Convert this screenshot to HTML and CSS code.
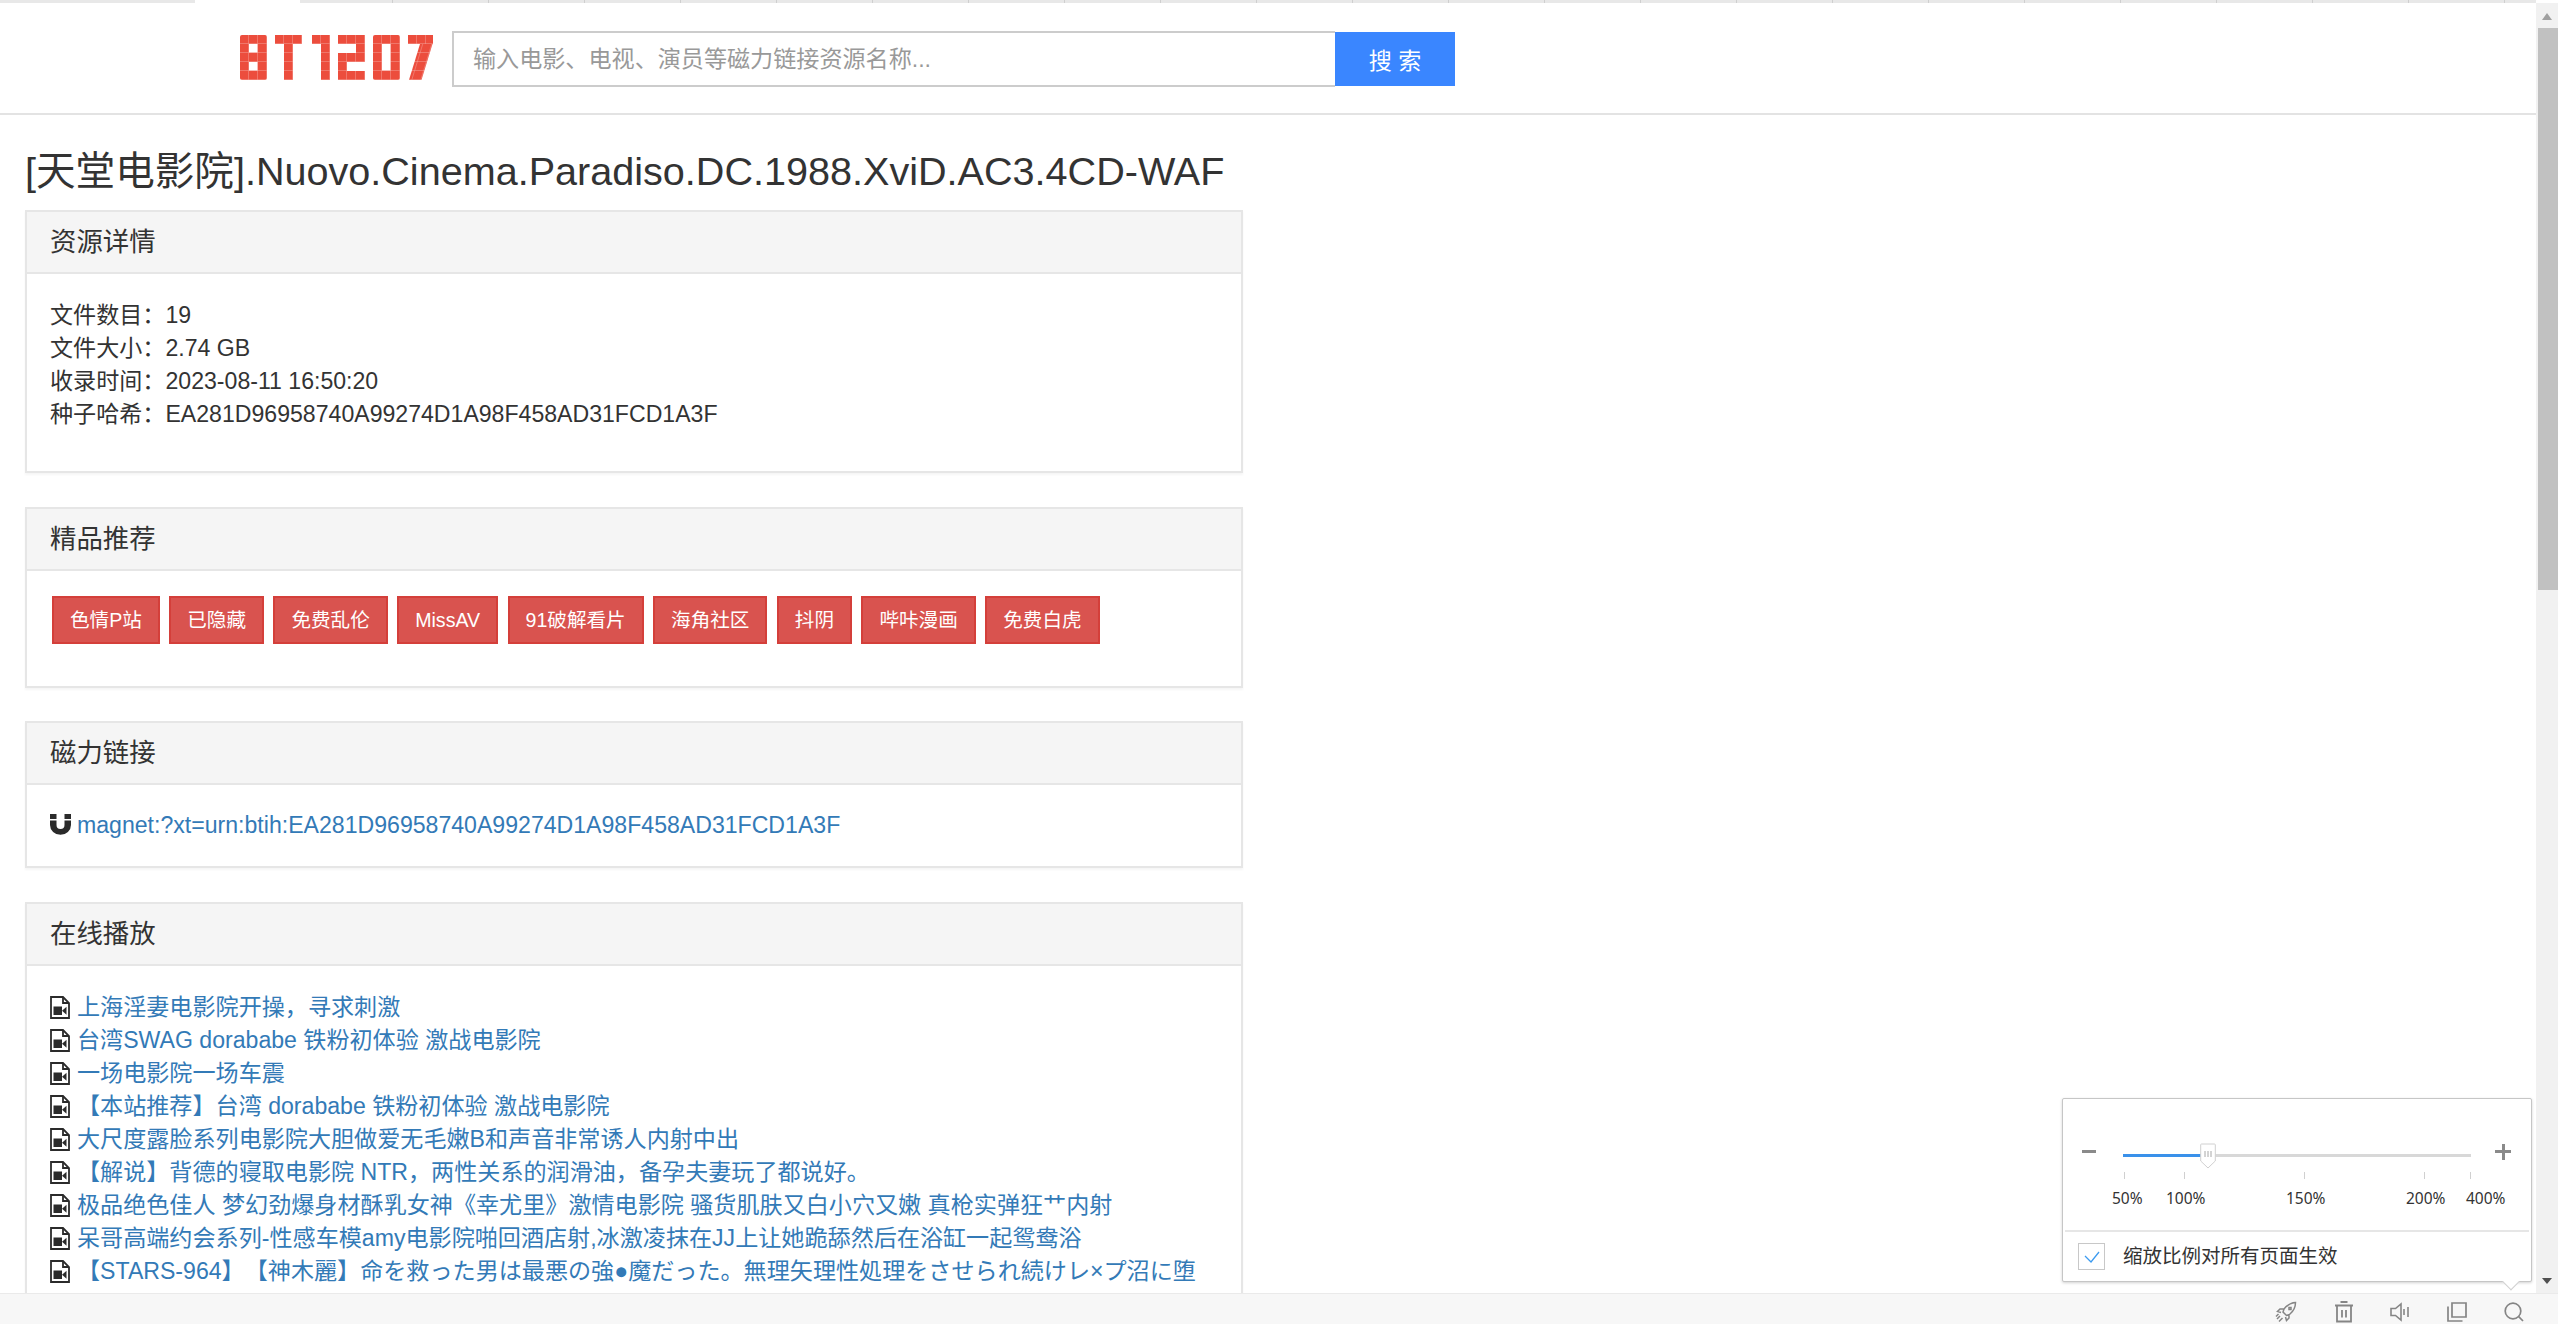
FILE: index.html
```html
<!DOCTYPE html>
<html lang="zh-CN">
<head>
<meta charset="utf-8">
<title>BT1207</title>
<link rel="stylesheet" href="styles.css">
</head>
<body>
<svg class="defs" width="0" height="0" aria-hidden="true">
  <defs>
    <pattern id="cell" width="9" height="9" patternUnits="userSpaceOnUse">
      <rect width="9" height="9" fill="#f4a097"/>
      <rect width="8.500" height="8.500" fill="#ec4d3d"/>
    </pattern>
    <symbol id="file" viewBox="0 0 20 23">
      <path d="M1 1h12l6 6v15H1z" fill="#fff" stroke="#2b2b2b" stroke-width="1.8"/>
      <path d="M13 1v6h6" fill="none" stroke="#2b2b2b" stroke-width="1.8"/>
      <rect x="3.5" y="10.5" width="8.5" height="8.5" fill="#2b2b2b"/>
      <polygon points="12,14.7 16.5,10.8 16.5,18.7" fill="#2b2b2b"/>
    </symbol>
  </defs>
</svg>
<div class="app">
  <div class="window">
    <div class="page">
      <div class="tabstrip"><span class="tab-a"></span><span class="tab-active"></span><span class="tab-b"></span></div>
      <header class="header">
        <svg class="logo" width="195" height="45" viewBox="0 0 195 45" role="img" aria-label="BT1207">
          <g>
            <rect width="27" height="45" rx="2" fill="url(#cell)"/>
            <rect x="9" y="9" width="8.500" height="8.500" fill="#fff"/>
            <rect x="9" y="27" width="8.500" height="8.500" fill="#fff"/>
          </g>
          <g transform="translate(35)">
            <rect width="27" height="9" fill="url(#cell)"/>
            <rect x="9" y="9" width="9" height="36" fill="url(#cell)"/>
          </g>
          <g transform="translate(72)">
            <rect width="18" height="9" fill="url(#cell)"/>
            <rect x="9" y="9" width="9" height="36" fill="url(#cell)"/>
          </g>
          <g transform="translate(98)">
            <rect width="27" height="9" fill="url(#cell)"/>
            <rect x="18" y="9" width="9" height="9" fill="url(#cell)"/>
            <rect y="18" width="27" height="9" fill="url(#cell)"/>
            <rect y="27" width="9" height="9" fill="url(#cell)"/>
            <rect y="36" width="27" height="9" fill="url(#cell)"/>
          </g>
          <g transform="translate(133)">
            <rect width="27" height="45" rx="2" fill="url(#cell)"/>
            <rect x="9" y="9" width="8.500" height="26.500" fill="#fff"/>
          </g>
          <g transform="translate(168)">
            <rect width="25" height="9" fill="url(#cell)"/>
            <rect x="14.750" y="9" width="12.500" height="36" fill="url(#cell)" transform="skewX(-17)"/>
          </g>
        </svg>
        <form class="search">
          <input class="search-input" type="text" placeholder="输入电影、电视、演员等磁力链接资源名称...">
          <button class="search-btn" type="button">搜 索</button>
        </form>
      </header>
      <main class="content">
        <h1 class="title">[天堂电影院].Nuovo.Cinema.Paradiso.DC.1988.XviD.AC3.4CD-WAF</h1>

        <section class="panel">
          <h3 class="panel-heading">资源详情</h3>
          <div class="panel-body">
            <p class="lines">文件数目：19<br>文件大小：2.74 GB<br>收录时间：2023-08-11 16:50:20<br>种子哈希：EA281D96958740A99274D1A98F458AD31FCD1A3F</p>
          </div>
        </section>

        <section class="panel">
          <h3 class="panel-heading">精品推荐</h3>
          <div class="panel-body btn-row">
            <a class="btn">色情P站</a>
            <a class="btn">已隐藏</a>
            <a class="btn">免费乱伦</a>
            <a class="btn">MissAV</a>
            <a class="btn">91破解看片</a>
            <a class="btn">海角社区</a>
            <a class="btn">抖阴</a>
            <a class="btn">哔咔漫画</a>
            <a class="btn">免费白虎</a>
          </div>
        </section>

        <section class="panel">
          <h3 class="panel-heading">磁力链接</h3>
          <div class="panel-body link-body">
            <div class="item">
              <svg class="magnet" width="21" height="21" viewBox="0 0 21 21" aria-hidden="true">
                <rect x="0" y="0" width="6.5" height="5" fill="#2b2b2b"/>
                <rect x="14.5" y="0" width="6.5" height="5" fill="#2b2b2b"/>
                <path d="M0 6.5h6.5V11a4 4 0 0 0 8 0V6.5H21V11a10.500 9.800 0 0 1-21 0z" fill="#2b2b2b"/>
              </svg>
              <a class="link">magnet:?xt=urn:btih:EA281D96958740A99274D1A98F458AD31FCD1A3F</a>
            </div>
          </div>
        </section>

        <section class="panel">
          <h3 class="panel-heading">在线播放</h3>
          <div class="panel-body list-body">
            <div class="item"><svg class="file" width="20" height="23"><use href="#file"/></svg><a class="link">上海淫妻电影院开操，寻求刺激</a></div>
            <div class="item"><svg class="file" width="20" height="23"><use href="#file"/></svg><a class="link">台湾SWAG dorababe 铁粉初体验 激战电影院</a></div>
            <div class="item"><svg class="file" width="20" height="23"><use href="#file"/></svg><a class="link">一场电影院一场车震</a></div>
            <div class="item"><svg class="file" width="20" height="23"><use href="#file"/></svg><a class="link">【本站推荐】台湾 dorababe 铁粉初体验 激战电影院</a></div>
            <div class="item"><svg class="file" width="20" height="23"><use href="#file"/></svg><a class="link">大尺度露脸系列电影院大胆做爱无毛嫩B和声音非常诱人内射中出</a></div>
            <div class="item"><svg class="file" width="20" height="23"><use href="#file"/></svg><a class="link">【解说】背德的寝取电影院 NTR，两性关系的润滑油，备孕夫妻玩了都说好。</a></div>
            <div class="item"><svg class="file" width="20" height="23"><use href="#file"/></svg><a class="link">极品绝色佳人 梦幻劲爆身材酥乳女神《幸尤里》激情电影院 骚货肌肤又白小穴又嫩 真枪实弹狂艹内射</a></div>
            <div class="item"><svg class="file" width="20" height="23"><use href="#file"/></svg><a class="link">呆哥高端约会系列-性感车模amy电影院啪回酒店射,冰激凌抹在JJ上让她跪舔然后在浴缸一起鸳鸯浴</a></div>
            <div class="item"><svg class="file" width="20" height="23"><use href="#file"/></svg><a class="link">【STARS-964】【神木麗】命を救った男は最悪の強●魔だった。無理矢理性処理をさせられ続けレ×プ沼に堕</a></div>
          </div>
        </section>
      </main>
    </div>
    <aside class="scrollbar">
      <span class="arrow-up"></span>
      <span class="thumb"></span>
      <span class="arrow-down"></span>
    </aside>
  </div>

  <footer class="statusbar">
    <svg class="sb-icon sb-rocket" width="22" height="22" viewBox="0 0 22 22" aria-hidden="true">
      <path d="M20.500 1.500c-5 .3-8.500 2.800-11.500 6.500l-1 3 3.500 3.500 3-1c3.700-3 6-6.500 6-12zM8.500 8H5L2.500 10.500l3.500 1M14 13.500V17l-2.500 2.500-1-3.500M14 6.500h2v2h-2zM5 15l-3 3M7.500 17l-3.500 3.500M3.500 13l-2.500 2.500" fill="none" stroke="#858585" stroke-width="1.500"/>
    </svg>
    <svg class="sb-icon" width="18" height="22" viewBox="0 0 18 22" aria-hidden="true">
      <path d="M0 4.500h18M5.500 1h7M2 4.500V20.500h14V4.500M7 9v7.500M11 9v7.500" fill="none" stroke="#858585" stroke-width="1.800"/>
    </svg>
    <svg class="sb-icon" width="20" height="20" viewBox="0 0 20 20" aria-hidden="true">
      <path d="M1 6.500h4.500L11 2v16l-5.500-4.500H1zM14 7v6M18 5v10" fill="none" stroke="#858585" stroke-width="1.600"/>
    </svg>
    <svg class="sb-icon" width="20" height="20" viewBox="0 0 20 20" aria-hidden="true">
      <path d="M5 1h14v14H5zM1 4.500V19h14.500" fill="none" stroke="#858585" stroke-width="1.700"/>
    </svg>
    <svg class="sb-icon" width="20" height="20" viewBox="0 0 20 20" aria-hidden="true">
      <circle cx="9" cy="9" r="7.800" fill="none" stroke="#858585" stroke-width="1.700"/>
      <path d="M14.700 14.700L19 19" stroke="#858585" stroke-width="1.700"/>
    </svg>
  </footer>

  <div class="zoom-pop">
    <div class="zoom-scale">
      <span class="zoom-minus"></span>
      <span class="zoom-plus"></span>
      <div class="slider">
        <div class="slider-fill"></div>
        <svg class="slider-thumb" width="16" height="26" viewBox="0 0 16 26" aria-hidden="true">
          <path d="M1.500 1h13a.800.800 0 0 1 .800.800V18L8 25 .700 18V1.800a.800.800 0 0 1 .800-.800z" fill="#fff" stroke="#d0d0d0"/>
          <path d="M5 8v6M8 8v6M11 8v6" stroke="#a8a8a8"/>
        </svg>
      </div>
      <i class="tick tick-1"></i><i class="tick tick-2"></i><i class="tick tick-3"></i><i class="tick tick-4"></i><i class="tick tick-5"></i>
      <span class="tick-label lab-1">50%</span>
      <span class="tick-label lab-2">100%</span>
      <span class="tick-label lab-3">150%</span>
      <span class="tick-label lab-4">200%</span>
      <span class="tick-label lab-5">400%</span>
    </div>
    <label class="zoom-check">
      <span class="checkbox">
        <svg width="16" height="12" viewBox="0 0 16 12" aria-hidden="true"><path d="M1 5l6 6 8-10" fill="none" stroke="#3c9bf0" stroke-width="1.300"/></svg>
      </span>
      缩放比例对所有页面生效
    </label>
    <span class="notch"></span>
  </div>
</div>
</body>
</html>
```
FILE: styles.css
```css
* { box-sizing: border-box; }
html, body { margin: 0; height: 100%; overflow: hidden; }
body {
  font-family: "Liberation Sans", "Noto Sans CJK SC", sans-serif;
  font-size: 23.1px;
  line-height: 33px;
  color: #333;
  background: #fff;
  text-spacing-trim: space-all;
}
.defs { position: absolute; }
.app { position: relative; display: flex; flex-direction: column; height: 1324px; width: 2558px; overflow: hidden; }
.window { display: flex; flex: none; height: 1293px; overflow: hidden; }
.page { flex: none; width: 2536px; height: 1293px; overflow: hidden; }

/* strip */
.tabstrip { display: flex; height: 3px; }
.tab-a { width: 195px; background: #e8e8e8; }
.tab-active { width: 105px; background: #fff; }
.tab-b { flex: 1; background: repeating-linear-gradient(90deg, #e8e8e8 0, #e8e8e8 95px, #cfcfcf 95px, #cfcfcf 96px); background-position: -3px 0; }

/* header */
.header { display: flex; align-items: center; height: 112px; padding: 2px 0 0 240px; border-bottom: 2px solid #e3e3e3; }
.logo { flex: none; margin: -3px 17px 0 0; }
.search { display: flex; align-items: center; }
.search-input {
  width: 883px; height: 56px; padding: 0 19px;
  border: 2px solid #ccc; border-right: 0;
  font: 23.1px "Liberation Sans", "Noto Sans CJK SC", sans-serif;
  color: #555; background: #fff; outline: none;
}
.search-input::placeholder { color: #999; opacity: 1; }
.search-btn {
  width: 120px; height: 54px; border: 0; padding: 0;
  background: #3a86ff; color: #fff;
  font: 23.1px "Liberation Sans", "Noto Sans CJK SC", sans-serif;
}

/* content */
.content { width: 1243px; padding-left: 25px; }
.title { margin: 32px 0 15px; font-size: 39.6px; line-height: 48px; font-weight: 400; color: #333; white-space: nowrap; }
.panel { margin-bottom: 33.6px; border: 2px solid #e6e6e6; box-shadow: 0 2px 2px rgba(0,0,0,.04); }
.panel-heading { margin: 0; height: 62px; padding: 0 23px; background: #f5f5f5; border-bottom: 2px solid #e6e6e6; font-size: 26.4px; line-height: 60px; font-weight: 400; color: #333; }
.panel-body { padding: 25px 23px; }
.lines { margin: 0 0 15px; }
.btn-row { display: flex; gap: 9.400px; padding: 25px 25px 42px; }
.btn {
  display: block; height: 48px; padding: 0 16px;
  background: #d9534f; border: 2px solid #d43f3a; color: #fff;
  font-size: 19.6px; line-height: 44px; white-space: nowrap;
}
.list-body { padding-top: 25px; }
.link-body { padding-top: 24px; padding-bottom: 24px; }
.item { display: flex; align-items: center; height: 33px; white-space: nowrap; }
.magnet { flex: none; margin-right: 6px; margin-top: -3px; }
.file { flex: none; margin-right: 7px; }
.link { color: #337ab7; }

/* scrollbar */
.scrollbar { position: relative; flex: 1; background: #f1f1f1; margin-top: 3px; }
.arrow-up { position: absolute; left: 6px; top: 10px; border: 6px solid transparent; border-top: 0; border-bottom: 7px solid #a0a0a0; border-left-width: 5.500px; border-right-width: 5.500px; }
.thumb { position: absolute; left: 2px; right: 0; top: 25px; height: 562px; background: #c1c1c1; }
.arrow-down { position: absolute; left: 6px; bottom: 9px; border: 5.500px solid transparent; border-bottom: 0; border-top: 6px solid #505050; }

/* status bar */
.statusbar { display: flex; align-items: center; justify-content: flex-end; flex: 1; gap: 37px; padding: 6px 34px 0 0; background: #f7f7f7; border-top: 1px solid #eaeaea; }
.sb-icon { flex: none; }
.sb-rocket { margin-right: 1px; }

/* zoom popup */
.zoom-pop {
  position: absolute; left: 2062px; top: 1098px; width: 470px; height: 184px;
  background: #fff; border: 1px solid #c6c6c6; border-radius: 2px;
  box-shadow: 0 1px 3px rgba(0,0,0,.18);
}
.zoom-scale { position: relative; height: 133px; border-bottom: 2px solid #e6e6e6; margin: 0 2px; }
.zoom-minus { position: absolute; left: 17px; top: 51px; width: 14px; height: 3px; background: #8a8a8a; }
.zoom-plus { position: absolute; left: 430px; top: 51px; width: 16px; height: 3px; background: #8a8a8a; }
.zoom-plus::after { content: ""; position: absolute; left: 6.500px; top: -6.500px; width: 3px; height: 16px; background: #8a8a8a; }
.slider { position: absolute; left: 58px; top: 55px; width: 348px; height: 3px; background: #d8d8d8; }
.slider-fill { width: 78px; height: 3px; background: #3a91ea; }
.slider-thumb { position: absolute; left: 77px; top: -11px; }
.tick { position: absolute; top: 73px; width: 1px; height: 7px; background: #d0d0d0; }
.tick-1 { left: 59px; } .tick-2 { left: 119px; } .tick-3 { left: 239px; } .tick-4 { left: 359px; } .tick-5 { left: 405px; }
.tick-label { position: absolute; top: 89px; font-size: 15.500px; line-height: 20px; color: #333; font-family: "Noto Sans", "Liberation Sans", sans-serif; white-space: nowrap; }
.lab-1 { left: 47px; } .lab-2 { left: 101px; } .lab-3 { left: 221px; } .lab-4 { left: 341px; } .lab-5 { left: 401px; }
.zoom-check { display: flex; align-items: center; height: 49px; padding-left: 15px; font-size: 19.500px; color: #333; gap: 18px; }
.checkbox { display: flex; align-items: center; justify-content: center; width: 27px; height: 27px; border: 1px solid #c8c8c8; }
.notch { position: absolute; right: 14px; bottom: -7px; width: 12px; height: 12px; background: #fff; transform: rotate(45deg); border-right: 1px solid #d0d0d0; border-bottom: 1px solid #d0d0d0; }
```
